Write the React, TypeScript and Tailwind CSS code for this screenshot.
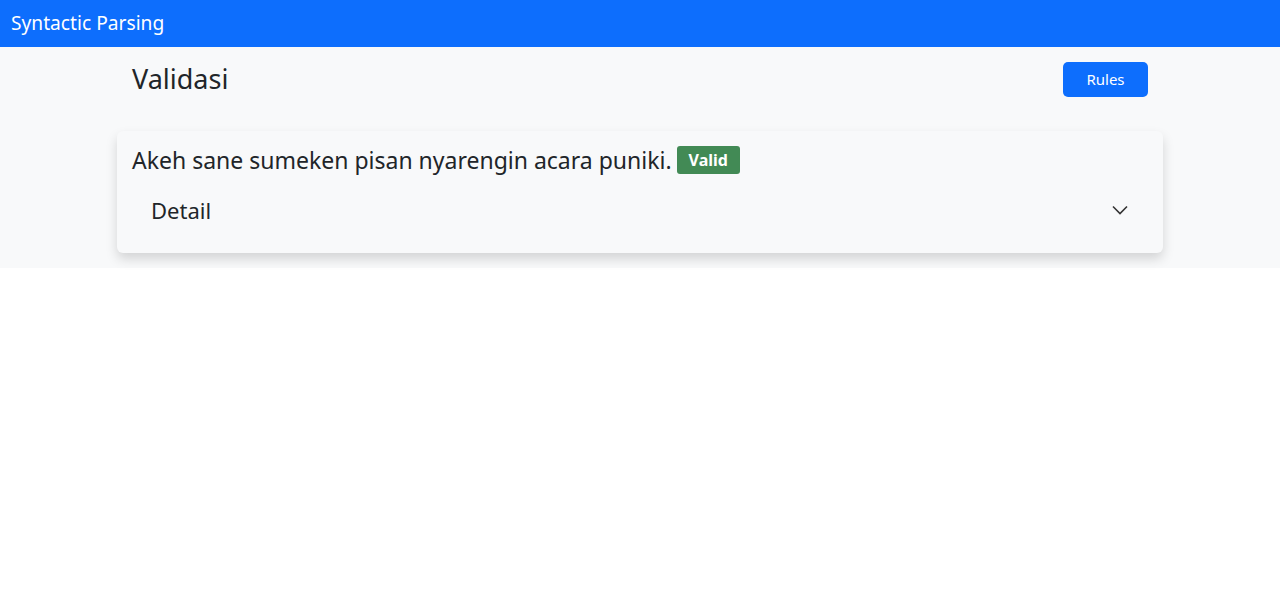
const App: React.FC = () => {
  return (
    <div className="min-h-screen bg-white font-['Noto_Sans',sans-serif] text-[#212529]">
      <nav className="bg-[#0d6efd] h-[47px] flex items-center px-[11px]">
        <span className="text-white text-[19.2px]">Syntactic Parsing</span>
      </nav>
      <div className="bg-[#f8f9fa] pb-[15px]">
        <div className="w-[1046px] mx-auto">
          <div className="flex justify-between items-start px-[15px] pt-[15px]">
            <h2 className="text-[27px] font-normal leading-[1.2] pt-[1px]">Validasi</h2>
            <button className="bg-[#0d6efd] text-white text-[15px] w-[85px] h-[35px] rounded-[5px]">
              Rules
            </button>
          </div>
          <div className="mt-[34px] rounded-md bg-[#f8f9fa] shadow-[0_6px_12px_rgba(0,0,0,0.15)] px-[15px] pt-[12px] pb-[14px]">
            <div className="flex items-center gap-[5px]">
              <span className="text-[23px] leading-[1.5]">
                Akeh sane sumeken pisan nyarengin acara puniki.
              </span>
              <span className="bg-[#428a55] text-white text-[16px] font-bold rounded-[3px] px-[12px] h-[28px] flex items-center">
                Valid
              </span>
            </div>
            <button className="w-full flex items-center justify-between pl-[19px] pr-[20px] py-[12px] mt-[4px]">
              <span className="text-[22px] leading-[1.5]">Detail</span>
              <svg width="16" height="10" viewBox="0 0 16 10" fill="none" stroke="#333" strokeWidth="1.6">
                <path d="M1 1.5 8 8.5 15 1.5" />
              </svg>
            </button>
          </div>
        </div>
      </div>
    </div>
  )
}

export default App
